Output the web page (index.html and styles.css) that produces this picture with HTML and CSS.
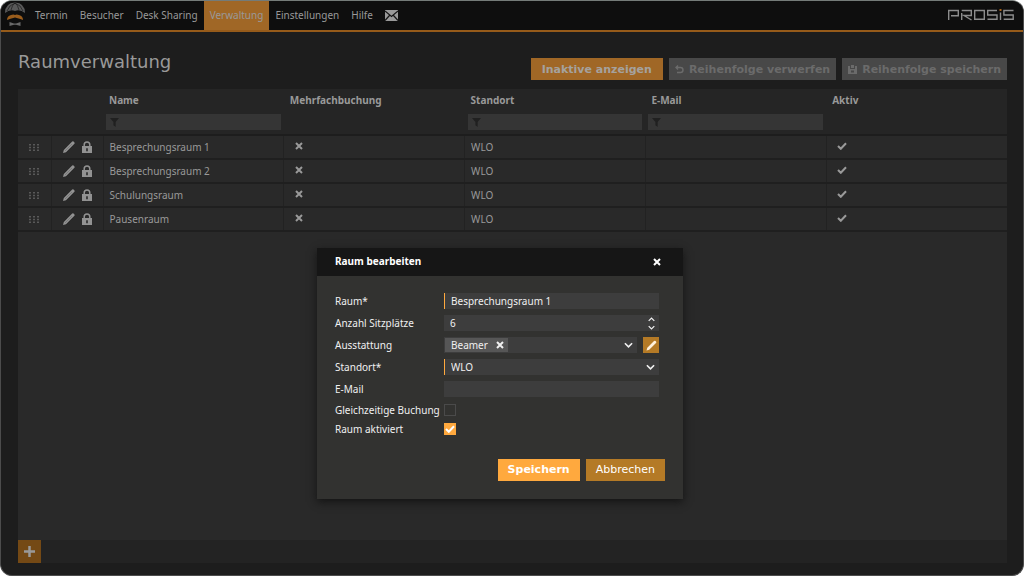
FILE: index.html
```html
<!DOCTYPE html>
<html lang="de">
<head>
<meta charset="utf-8">
<title>Raumverwaltung</title>
<link rel="stylesheet" href="styles.css">
</head>
<body>
<svg class="defs" aria-hidden="true">
  <symbol id="pencil" viewBox="0 0 12 12"><path d="M0 12l.8-3L9.200.6q.7-.7 1.400 0l.8.8q.7.700 0 1.400L3 11.200z" fill="currentColor"/><path d="M2 10L9 3" stroke="#292929" stroke-opacity=".4" stroke-width=".6"/></symbol>
  <symbol id="lock" viewBox="0 0 10 12"><path d="M2.200 6V3.800a2.800 2.800 0 0 1 5.600 0V6" fill="none" stroke="currentColor" stroke-width="1.500"/><path d="M0 5h10v7H0z" fill="currentColor"/><path d="M4.200 7.200h1.600v3H4.200z" fill="#292929"/></symbol>
  <symbol id="cross" viewBox="0 0 8 8"><path d="M1 1l6 6M7 1L1 7" stroke="currentColor" stroke-width="2"/></symbol>
  <symbol id="check" viewBox="0 0 10 8"><path d="M1 4l2.800 2.800L9 1.300" fill="none" stroke="currentColor" stroke-width="2"/></symbol>
  <symbol id="funnel" viewBox="0 0 10 10"><path d="M0 0h10L6.300 4.500V10L3.800 8V4.500z" fill="currentColor"/></symbol>
  <symbol id="grip" viewBox="0 0 10 7"><path d="M0 0h2v1.500H0zM4 0h2v1.500H4zM8 0h2v1.500H8zM0 2.700h2v1.500H0zM4 2.700h2v1.500H4zM8 2.700h2v1.500H8zM0 5.400h2v1.500H0zM4 5.400h2v1.500H4zM8 5.400h2v1.500H8z" fill="currentColor"/></symbol>
  <symbol id="chevron" viewBox="0 0 10 6"><path d="M1 1l4 4 4-4" fill="none" stroke="currentColor" stroke-width="1.800"/></symbol>
</svg>
<div class="app">
  <header class="topbar">
    <svg class="mark" viewBox="0 0 22 24" aria-hidden="true">
      <path d="M1 11Q1 1 11 .5Q21 1 21 11Q16 7 11 9Q6 7 1 11z" fill="#595959"/>
      <path d="M3 9Q5 3 11 1M7 8Q8 3 11 1M15 8Q14 3 11 1M19 9Q17 3 11 1" stroke="#111" stroke-width=".6" fill="none"/>
      <path d="M3 18Q3 14 7 13Q9.500 12 11 13Q12.500 12 15 13Q19 14 19 18Q16 16.500 11 15.500Q6 16.500 3 18z" fill="#9a5d1c"/>
      <path d="M5.500 20l4.500 1.500h2l4.500-1.500v4L12 22.800h-2L5.500 24z" fill="#686868"/>
    </svg>
    <nav class="menu">
      <a href="#">Termin</a>
      <a href="#">Besucher</a>
      <a href="#">Desk Sharing</a>
      <a href="#" class="current">Verwaltung</a>
      <a href="#">Einstellungen</a>
      <a href="#">Hilfe</a>
      <a href="#" class="mail" aria-label="Nachrichten"><svg width="13" height="11" viewBox="0 0 13 11"><path d="M0 0h13v11H0z" fill="#999"/><path d="M0 1l6.500 5.500L13 1M0 10.500l4.500-5M13 10.500l-4.500-5" fill="none" stroke="#151515" stroke-width="1.200"/></svg></a>
    </nav>
    <svg class="brand" viewBox="0 0 66 12" role="img" aria-label="Prosis"><g fill="none" stroke="#8c8c8c" stroke-width="1.400"><path d="M.7 11V1.500h9.600v5.200H3"/><path d="M13.700 11V4M13.700 1.500h9.600v5H16l7.500 4.500"/><path d="M26.700 1.500h9.600v8.800h-9.600z"/><path d="M49 1.500h-9.300V6H49v4.300h-9.500"/><path d="M52.500 3.500V11"/><path d="M65.500 1.500h-9.600V6h9.300v4.300h-9.500"/></g><path d="M51.500 0h2v2h-2z" fill="#a8651d"/></svg>
  </header>

  <main class="page">
    <div class="heading">
      <h1>Raumverwaltung</h1>
      <div class="actions">
        <button type="button" class="btn-show">Inaktive anzeigen</button>
        <button type="button" disabled><svg width="9" height="9" viewBox="0 0 9 9"><path d="M3 .5L1 2.500l2 2M1 2.500h4.500a2.500 2.500 0 0 1 0 5H2" fill="none" stroke="currentColor" stroke-width="1.400"/></svg>Reihenfolge verwerfen</button>
        <button type="button" disabled><svg width="9" height="9" viewBox="0 0 9 9"><path d="M0 1h2v3h5V1h2v8H0z" fill="currentColor"/><path d="M3 0h3v3H3z" fill="currentColor"/><path d="M3 5.500h3v2H3z" fill="#484848"/></svg>Reihenfolge speichern</button>
      </div>
    </div>

    <section class="grid">
      <table>
        <colgroup><col class="c-grip"><col class="c-tools"><col><col><col><col><col></colgroup>
        <thead>
          <tr>
            <th></th><th></th>
            <th><span>Name</span><label class="filter"><svg><use href="#funnel"/></svg><input type="text" aria-label="Name filtern"></label></th>
            <th><span>Mehrfachbuchung</span></th>
            <th><span>Standort</span><label class="filter"><svg><use href="#funnel"/></svg><input type="text" aria-label="Standort filtern"></label></th>
            <th><span>E-Mail</span><label class="filter"><svg><use href="#funnel"/></svg><input type="text" aria-label="E-Mail filtern"></label></th>
            <th><span>Aktiv</span></th>
          </tr>
        </thead>
        <tbody>
          <tr><td><svg class="grip"><use href="#grip"/></svg></td><td><div class="tools"><svg class="pencil"><use href="#pencil"/></svg><svg class="lock"><use href="#lock"/></svg></div></td><td>Besprechungsraum 1</td><td><svg class="cross"><use href="#cross"/></svg></td><td>WLO</td><td></td><td><svg class="check"><use href="#check"/></svg></td></tr>
          <tr><td><svg class="grip"><use href="#grip"/></svg></td><td><div class="tools"><svg class="pencil"><use href="#pencil"/></svg><svg class="lock"><use href="#lock"/></svg></div></td><td>Besprechungsraum 2</td><td><svg class="cross"><use href="#cross"/></svg></td><td>WLO</td><td></td><td><svg class="check"><use href="#check"/></svg></td></tr>
          <tr><td><svg class="grip"><use href="#grip"/></svg></td><td><div class="tools"><svg class="pencil"><use href="#pencil"/></svg><svg class="lock"><use href="#lock"/></svg></div></td><td>Schulungsraum</td><td><svg class="cross"><use href="#cross"/></svg></td><td>WLO</td><td></td><td><svg class="check"><use href="#check"/></svg></td></tr>
          <tr><td><svg class="grip"><use href="#grip"/></svg></td><td><div class="tools"><svg class="pencil"><use href="#pencil"/></svg><svg class="lock"><use href="#lock"/></svg></div></td><td>Pausenraum</td><td><svg class="cross"><use href="#cross"/></svg></td><td>WLO</td><td></td><td><svg class="check"><use href="#check"/></svg></td></tr>
        </tbody>
      </table>
      <footer class="grid-foot"><button type="button" aria-label="Raum hinzufügen"><svg width="11" height="11" viewBox="0 0 11 11"><path d="M5.500 0v11M0 5.500h11" stroke="#999" stroke-width="2.500"/></svg></button></footer>
    </section>
  </main>

  <div class="overlay">
    <form class="dialog" role="dialog" aria-labelledby="dlg-title">
      <div class="dialog-head">
        <h2 id="dlg-title">Raum bearbeiten</h2>
        <button type="button" aria-label="Schließen"><svg class="cross"><use href="#cross"/></svg></button>
      </div>
      <div class="fields">
        <label for="raum">Raum*</label>
        <input id="raum" class="field required" type="text" value="Besprechungsraum 1">
        <label for="plaetze">Anzahl Sitzplätze</label>
        <div class="field combo"><input id="plaetze" type="text" inputmode="numeric" value="6"><span class="spin"><svg class="up"><use href="#chevron"/></svg><svg><use href="#chevron"/></svg></span></div>
        <label for="ausstattung">Ausstattung</label>
        <div class="pair">
          <div class="field combo tags"><span class="tag">Beamer<button type="button" aria-label="Beamer entfernen"><svg class="cross"><use href="#cross"/></svg></button></span><input id="ausstattung" type="text"><svg class="chev"><use href="#chevron"/></svg></div>
          <button type="button" class="edit" aria-label="Ausstattung bearbeiten"><svg width="11" height="11" viewBox="0 0 11 11"><path d="M.5 10.500l.8-2.700L8 1.100q.8-.8 1.600 0l.4.400q.8.800 0 1.600L3.200 9.700z" fill="#fff1dc"/></svg></button>
        </div>
        <label for="standort">Standort*</label>
        <div class="field combo required"><select id="standort"><option>WLO</option></select><svg class="chev"><use href="#chevron"/></svg></div>
        <label for="email">E-Mail</label>
        <input id="email" class="field" type="text">
      </div>
      <div class="checks">
        <label for="gleich">Gleichzeitige Buchung</label><input id="gleich" type="checkbox">
        <label for="aktiv">Raum aktiviert</label><span class="ticked"><input id="aktiv" type="checkbox" checked><svg><use href="#check"/></svg></span>
      </div>
      <div class="dialog-foot">
        <button type="submit" class="save">Speichern</button>
        <button type="button" class="cancel">Abbrechen</button>
      </div>
    </form>
  </div>
</div>
</body>
</html>
```
FILE: styles.css
```css
* { box-sizing: border-box; }
html { background: #fff; }
body { margin: 0; font: 10px/14px "Noto Sans", Verdana, sans-serif; color: #999; }
button, input, select { font: inherit; color: inherit; border: 0; padding: 0; margin: 0; background: none; border-radius: 0; outline: 0; min-width: 0; }
svg { display: block; flex: none; }
h1, h2 { margin: 0; font-weight: normal; }
.defs { position: absolute; width: 0; height: 0; }

.app { position: relative; display: flex; flex-direction: column; min-height: 100vh; border: 1px solid #4c4c4c; border-top-color: #747b78; border-radius: 12px; background: #1d1d1d; overflow: hidden; }

.topbar { display: flex; align-items: stretch; height: 31px; padding: 0 9px 0 3px; background: #0e0e0e; border-bottom: 2px solid #965b1a; }
.mark { width: 22px; height: 24px; margin-top: 1px; }
.menu { display: flex; flex: 1; margin-left: 3px; }
.menu a { display: flex; align-items: center; padding: 0 6px 2px; color: #999; text-decoration: none; }
.menu .current { background: #a06726; }
.menu .mail { padding: 0 6px; }
.brand { width: 66px; height: 12px; margin-top: 8px; }

.page { flex: 1; display: flex; flex-direction: column; padding: 0 16px 12px 17px; }
.heading { display: flex; justify-content: space-between; height: 57px; font-family: "DejaVu Sans", Verdana, sans-serif; }
h1 { font-size: 18px; line-height: 24px; padding-top: 18px; }
.actions { display: flex; gap: 6px; padding-top: 26px; }
.actions button { display: flex; align-items: center; justify-content: center; gap: 5px; height: 22px; padding: 1px 6px 0; background: #484848; color: #6b6b6b; font-size: 11px; font-weight: bold; }
.actions .btn-show { padding: 1px 11px 0; background: #a06726; color: #a5a29e; }

.grid { flex: 1; display: flex; flex-direction: column; background: #292929; }
table { width: 100%; table-layout: fixed; border-collapse: collapse; }
.c-grip { width: 33px; }
.c-tools { width: 52px; }
thead tr { height: 46px; background: #252525; border-bottom: 2px solid #1d1d1d; }
th { padding: 4px 3px 0; text-align: left; vertical-align: top; }
th span { display: block; padding-left: 3px; }
.filter { display: flex; align-items: center; height: 16px; margin-top: 7px; padding-left: 4px; background: #353535; }
.filter svg { width: 9px; height: 9px; color: #202020; }
.filter input { flex: 1; }
tbody tr { height: 24px; border-bottom: 2px solid #1f1f1f; }
td { padding: 0 6px; border-right: 1px solid #222; }
td:last-child { border-right: 0; }
.grip { width: 10px; height: 7px; margin: auto; color: #595959; }
.tools { display: flex; gap: 7px; padding-left: 5px; }
.pencil { width: 12px; height: 12px; color: #929292; }
.lock { width: 10px; height: 12px; color: #929292; }
.cross { width: 8px; height: 8px; }
td .cross { margin: 0 0 3px 5px; }
.check { width: 10px; height: 8px; margin: 0 0 3px 4px; }
.grid-foot { margin-top: auto; background: #232323; }
.grid-foot button { display: grid; place-items: center; width: 23px; height: 23px; background: #744915; }

.overlay { position: absolute; inset: 0; display: flex; align-items: flex-start; justify-content: center; padding: 247px 24px 0 0; }
.dialog { width: 366px; background: #323230; color: #f0f0f0; box-shadow: 0 3px 8px #141414; }
.dialog-head { display: flex; align-items: center; justify-content: space-between; height: 28px; padding: 0 22px 0 18px; background: #161616; color: #fff; }
h2 { font-size: 10px; line-height: 14px; font-weight: bold; padding-bottom: 2px; }
.fields { display: grid; grid-template-columns: 109px minmax(0, 1fr); row-gap: 6px; align-items: center; padding: 17px 24px 0 18px; }
.fields > label { line-height: 16px; white-space: nowrap; }
.field { width: 100%; height: 16px; padding-left: 6px; background: #3d3d3d; }
.combo { display: flex; align-items: center; padding-right: 4px; }
.combo input { flex: 1; width: 0; }
.combo select { flex: 1; appearance: none; }
.required { border-left: 1px solid #ffa93e; }
.spin { display: grid; gap: 3px; }
.spin svg { width: 7px; height: 5px; }
.spin .up { transform: rotate(180deg); }
.chev { width: 9px; height: 6px; }
.pair { display: flex; gap: 6px; }
.pair .field { flex: 1; min-width: 0; }
.pair .tags { padding-left: 1px; }
.tag { display: flex; align-items: center; gap: 8px; height: 14px; padding: 0 4px 0 6px; background: #565656; }
.edit { display: grid; flex: none; place-items: center; width: 16px; height: 16px; background: #b47a26; }
.checks { display: grid; grid-template-columns: 109px 1fr; align-items: center; row-gap: 5px; padding: 6px 18px 0; }
.checks label { white-space: nowrap; }
.checks input { display: block; appearance: none; width: 12px; height: 12px; border: 1px solid #4a4a4a; }
.checks input:checked { background: #ffa93e; border-color: #ffa93e; }
.ticked { display: grid; width: 12px; place-items: center; color: #fff; }
.ticked > * { grid-area: 1 / 1; }
.ticked svg { width: 10px; height: 8px; pointer-events: none; }
.dialog-foot { display: flex; justify-content: flex-end; gap: 6px; padding: 23px 18px 18px; font-family: "DejaVu Sans", Verdana, sans-serif; }
.dialog-foot button { height: 22px; padding: 0 10px; font-size: 11px; color: #fff; }
.dialog-foot .save { background: #ffa93e; font-weight: bold; }
.dialog-foot .cancel { background: #b47a26; }
```
